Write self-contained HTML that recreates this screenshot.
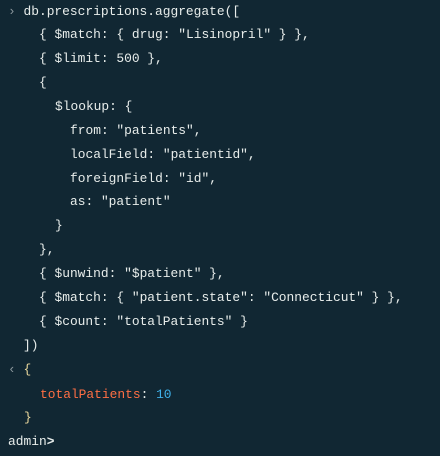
<!DOCTYPE html>
<html><head><style>
html,body{margin:0;padding:0;background:#112733;width:440px;height:456px;overflow:hidden}
.l{position:absolute;left:0;height:24px;line-height:24px;font-family:"Liberation Mono",monospace;font-size:12.9px;color:#e8edeb;white-space:pre}
.c{color:#8a969c}
.k{color:#ff6f44}
.n{color:#3fb1ea}
.b{color:#e9d79c}
</style></head><body>
<div class="l" style="top:0;left:8px"><span class="c">›</span> db.prescriptions.aggregate([</div>
<div class="l" style="top:23px;left:39px">{ $match: { drug: "Lisinopril" } },</div>
<div class="l" style="top:47px;left:39px">{ $limit: 500 },</div>
<div class="l" style="top:71px;left:39px">{</div>
<div class="l" style="top:95px;left:55px">$lookup: {</div>
<div class="l" style="top:119px;left:70px">from: "patients",</div>
<div class="l" style="top:143px;left:70px">localField: "patientid",</div>
<div class="l" style="top:167px;left:70px">foreignField: "id",</div>
<div class="l" style="top:190px;left:70px">as: "patient"</div>
<div class="l" style="top:214px;left:55px">}</div>
<div class="l" style="top:238px;left:39px">},</div>
<div class="l" style="top:262px;left:39px">{ $unwind: "$patient" },</div>
<div class="l" style="top:286px;left:39px">{ $match: { "patient.state": "Connecticut" } },</div>
<div class="l" style="top:310px;left:39px">{ $count: "totalPatients" }</div>
<div class="l" style="top:334px;left:23px">])</div>
<div class="l" style="top:358px;left:8px"><span class="c">‹</span> <span class="b">{</span></div>
<div class="l" style="top:383px;left:40px"><span class="k">totalPatients</span>: <span class="n">10</span></div>
<div class="l" style="top:406px;left:24px"><span class="b">}</span></div>
<div class="l" style="top:430px;left:8px">admin<b style="font-weight:bold">&gt;</b></div>
</body></html>
